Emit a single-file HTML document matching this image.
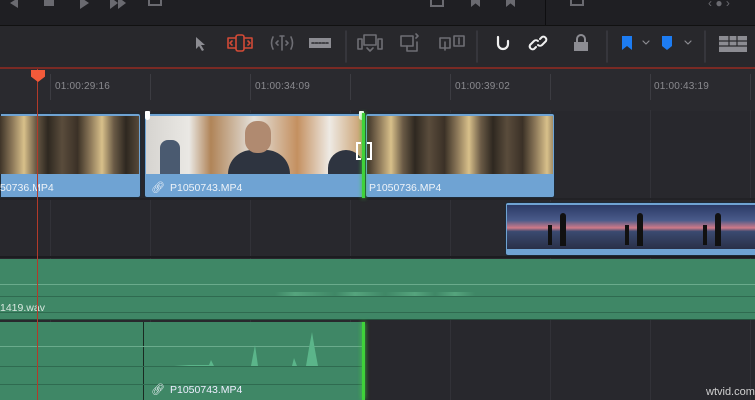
<!DOCTYPE html>
<html><head><meta charset="utf-8"><style>
*{margin:0;padding:0;box-sizing:border-box}
body{width:755px;height:400px;overflow:hidden;background:#28282d;position:relative;font-family:"Liberation Sans",sans-serif}
.a{position:absolute}
.tc{position:absolute;top:81px;font-size:10px;color:#8a8a8f;letter-spacing:.2px}
.tick{position:absolute;top:74px;width:1px;height:26px;background:#3c3c42}
.grid{position:absolute;top:110px;width:1px;height:290px;background:#323238}
.lbl{position:absolute;font-size:10.5px;color:#eef3f8}
.thumbA{background:repeating-linear-gradient(90deg,#3e3428 0px,#8a7658 12px,#d8c08a 24px,#6a5a46 36px,#2e2820 48px,#5a4c3c 62px,#3a3026 78px)}
.thumbB{background:linear-gradient(90deg,#d6d4d0 0%,#eae8e4 20%,#b08458 30%,#e5e2dc 50%,#c49060 70%,#eeeae4 85%,#caa070 100%)}
.sun{background:linear-gradient(180deg,#2b3a66 0%,#4a5b8a 35%,#d07a88 52%,#3a4a70 60%,#2a3048 100%)}
</style></head><body>
<div class="a" style="left:0;top:0;width:755px;height:25px;background:#1f1f23"></div>
<div class="a" style="left:0;top:25px;width:755px;height:1px;background:#111"></div>
<div class="a" style="left:545px;top:0;width:1px;height:25px;background:#0e0e10"></div>
<div class="a" style="left:10px;top:-2px;width:0;height:0;border-top:5px solid transparent;border-bottom:5px solid transparent;border-right:8px solid #6a6a70"></div>
<div class="a" style="left:44px;top:0;width:10px;height:6px;background:#6a6a70"></div>
<div class="a" style="left:80px;top:-3px;width:0;height:0;border-top:6px solid transparent;border-bottom:6px solid transparent;border-left:9px solid #6a6a70"></div>
<div class="a" style="left:110px;top:-3px;width:0;height:0;border-top:6px solid transparent;border-bottom:6px solid transparent;border-left:8px solid #6a6a70"></div>
<div class="a" style="left:118px;top:-3px;width:0;height:0;border-top:6px solid transparent;border-bottom:6px solid transparent;border-left:8px solid #6a6a70"></div>
<div class="a" style="left:148px;top:0;width:14px;height:6px;border:2px solid #6a6a70;border-top:none"></div>
<div class="a" style="left:430px;top:0;width:14px;height:7px;border:2px solid #6a6a70;border-top:none"></div>
<div class="a" style="left:471px;top:-2px;width:9px;height:9px;background:#6a6a70;clip-path:polygon(0 0,100% 0,100% 100%,50% 60%,0 100%)"></div>
<div class="a" style="left:506px;top:-2px;width:9px;height:9px;background:#6a6a70;clip-path:polygon(0 0,100% 0,100% 100%,50% 60%,0 100%)"></div>
<div class="a" style="left:570px;top:0;width:14px;height:6px;border:2px solid #6a6a70;border-top:none"></div>
<div class="a" style="left:708px;top:-4px;font-size:12px;color:#6a6a70">‹ ● ›</div>
<div class="a" style="left:0;top:26px;width:755px;height:41px;background:#28282c"></div>
<svg class="a" style="left:0;top:26px" width="755" height="41">
<g fill="none" stroke-width="1.6" stroke-linecap="round" stroke-linejoin="round">
<path d="M196 11 L196 23 L199 20 L202 25 L204 24 L201 19 L205 19 Z" fill="#8c8c92" stroke="none"/>
<rect x="228" y="12" width="24" height="10" stroke="#d34a36"/>
<rect x="236" y="9" width="8" height="16" rx="2" stroke="#d34a36" fill="#28282c"/>
<path d="M232 15 l-2 2 l2 2 M248 15 l2 2 l-2 2" stroke="#d34a36"/>
<path d="M273 11 q-3 6 0 12 M291 11 q3 6 0 12 M282 10 v14 M280 10 h4 M278 15 l-2 2 l2 2 M286 15 l2 2 l-2 2" stroke="#6e6e74"/>
<rect x="309" y="12" width="22" height="10" fill="#8c8c92" stroke="none"/>
<path d="M312 17 h16" stroke="#28282c" stroke-dasharray="2 1.5"/>
<line x1="346" y1="5" x2="346" y2="36" stroke="#3a3a40"/>
<rect x="358" y="13" width="4" height="10" stroke="#6e6e74"/><rect x="378" y="13" width="4" height="10" stroke="#6e6e74"/>
<rect x="364" y="9" width="12" height="10" stroke="#6e6e74"/><path d="M367 22 l3 3 l3 -3" stroke="#6e6e74"/>
<rect x="401" y="10" width="12" height="10" stroke="#6e6e74"/><path d="M407 20 v5 h10 v-9 M416 8 l2 2 l-2 2" stroke="#6e6e74"/>
<rect x="440" y="12" width="10" height="10" stroke="#6e6e74"/><rect x="454" y="10" width="10" height="10" stroke="#6e6e74"/><path d="M445 16 v8 M459 12 v6" stroke="#6e6e74"/>
<line x1="477" y1="5" x2="477" y2="36" stroke="#3a3a40"/>
<path d="M498 11 v7 a5 5 0 0 0 10 0 v-3" stroke="#f0f0f0" stroke-width="2.2"/>
<path d="M536 21 l-2 2 a3 3 0 0 1 -4 -4 l4 -4 a3 3 0 0 1 4 0 M540 13 l2 -2 a3 3 0 0 1 4 4 l-4 4 a3 3 0 0 1 -4 0" stroke="#f0f0f0" stroke-width="2"/>
<rect x="574" y="16" width="14" height="9" fill="#8c8c92" stroke="none"/><path d="M577 16 v-3 a4 4 0 0 1 8 0 v3" stroke="#8c8c92" stroke-width="2"/>
<line x1="607" y1="5" x2="607" y2="36" stroke="#3a3a40"/>
<path d="M622 10 h10 v14 l-5 -4 l-5 4 Z" fill="#1d7cf2" stroke="none"/>
<path d="M643 15 l3 3 l3 -3 M685 15 l3 3 l3 -3" stroke="#8c8c92" stroke-width="1.2"/>
<path d="M662 10 h10 v10 l-5 4 l-5 -4 Z" fill="#1d7cf2" stroke="none"/>
<line x1="705" y1="5" x2="705" y2="36" stroke="#3a3a40"/>
<rect x="719" y="10" width="28" height="16" fill="#8c8c92" stroke="none"/>
<path d="M719 15 h28 M719 20 h28 M729 10 v10 M737 10 v10" stroke="#28282c" stroke-width="1.2"/>
</g></svg>
<div class="a" style="left:0;top:67px;width:755px;height:2px;background:#7a2a24"></div>
<div class="a" style="left:0;top:69px;width:755px;height:42px;background:#2a2a2f"></div>
<div class="tick" style="left:50px"></div><div class="tick" style="left:150px"></div><div class="tick" style="left:250px"></div><div class="tick" style="left:350px"></div><div class="tick" style="left:450px"></div><div class="tick" style="left:550px"></div><div class="tick" style="left:650px"></div><div class="tick" style="left:750px"></div>
<div class="tc" style="left:55px">01:00:29:16</div>
<div class="tc" style="left:255px">01:00:34:09</div>
<div class="tc" style="left:455px">01:00:39:02</div>
<div class="tc" style="left:654px">01:00:43:19</div>
<div class="grid" style="left:50px"></div><div class="grid" style="left:150px"></div><div class="grid" style="left:250px"></div><div class="grid" style="left:350px"></div><div class="grid" style="left:450px"></div><div class="grid" style="left:550px"></div><div class="grid" style="left:650px"></div><div class="grid" style="left:750px"></div>
<div class="a" style="left:0;top:198px;width:755px;height:2px;background:#222226"></div>
<div class="a" style="left:0;top:256px;width:755px;height:2px;background:#1c1c20"></div>
<div class="a" style="left:0;top:113px;width:141px;height:85px;background:#6fa3d3;border-radius:0 3px 3px 0;border:1px solid #1e2a36"></div>
<div class="a thumbA" style="left:0;top:116px;width:139px;height:58px"></div>
<div class="lbl" style="left:0;top:182px">50736.MP4</div>
<div class="a" style="left:144px;top:113px;width:220px;height:85px;background:#6fa3d3;border-radius:3px;border:1px solid #1e2a36"></div>
<div class="a thumbB" style="left:146px;top:116px;width:216px;height:58px"></div>
<div class="a" style="left:160px;top:140px;width:20px;height:34px;background:#4a5a70;border-radius:8px 8px 0 0"></div>
<div class="a" style="left:228px;top:150px;width:62px;height:24px;background:#2e3440;border-radius:30px 30px 0 0"></div>
<div class="a" style="left:245px;top:121px;width:26px;height:32px;background:#b08a70;border-radius:12px"></div>
<div class="a" style="left:328px;top:150px;width:36px;height:24px;background:#2e3440;border-radius:20px 20px 0 0"></div>
<div class="lbl" style="left:170px;top:182px">P1050743.MP4</div>
<div class="lbl" style="left:151px;top:181px;font-size:11px">&#x1F517;&#xFE0E;</div>
<div class="a" style="left:365px;top:113px;width:190px;height:85px;background:#6fa3d3;border-radius:3px;border:1px solid #1e2a36"></div>
<div class="a thumbA" style="left:367px;top:116px;width:186px;height:58px"></div>
<div class="lbl" style="left:369px;top:182px">P1050736.MP4</div>
<div class="a" style="left:145px;top:111px;width:5px;height:9px;background:#fff;border-radius:1px 1px 3px 3px"></div>
<div class="a" style="left:359px;top:111px;width:5px;height:9px;background:#fff;border-radius:1px 1px 3px 3px"></div>
<div class="a" style="left:362px;top:113px;width:3px;height:85px;background:#3fd23a;box-shadow:0 0 4px #3fd23a"></div>
<div class="a" style="left:356px;top:142px;width:5px;height:18px;border:2px solid #fff;border-right:none"></div>
<div class="a" style="left:367px;top:142px;width:5px;height:18px;border:2px solid #fff;border-left:none"></div>
<div class="a" style="left:505px;top:202px;width:252px;height:54px;background:#6fa3d3;border-radius:3px 0 0 3px;border:1px solid #1e2a36"></div>
<div class="a sun" style="left:507px;top:205px;width:248px;height:44px"></div>
<div class="a" style="left:560px;top:213px;width:6px;height:33px;background:#111;border-radius:3px 3px 0 0"></div>
<div class="a" style="left:548px;top:225px;width:4px;height:20px;background:#111"></div>
<div class="a" style="left:637px;top:213px;width:6px;height:33px;background:#111;border-radius:3px 3px 0 0"></div>
<div class="a" style="left:625px;top:225px;width:4px;height:20px;background:#111"></div>
<div class="a" style="left:715px;top:213px;width:6px;height:33px;background:#111;border-radius:3px 3px 0 0"></div>
<div class="a" style="left:703px;top:225px;width:4px;height:20px;background:#111"></div>
<div class="a" style="left:0;top:259px;width:755px;height:61px;background:#3f8766;border-bottom:1px solid #24503c"></div>
<div class="a" style="left:0;top:284px;width:755px;height:1px;background:#6aab8c"></div>
<div class="a" style="left:0;top:312px;width:755px;height:1px;background:#2f6b50"></div>
<div class="a" style="left:0;top:296px;width:755px;height:1px;background:#2f6b50"></div>
<div class="a" style="left:275px;top:292px;width:200px;height:4px;background:linear-gradient(90deg,transparent,#55a47d 10%,transparent 30%,#55a47d 40%,transparent 55%,#55a47d 70%,transparent 80%,#55a47d 90%,transparent)"></div>
<div class="lbl" style="left:0;top:302px;color:#d8e8e0">1419.wav</div>
<div class="a" style="left:0;top:322px;width:143px;height:78px;background:#3f8766"></div>
<div class="a" style="left:143px;top:322px;width:1px;height:78px;background:#1a2a22"></div>
<div class="a" style="left:144px;top:322px;width:219px;height:78px;background:#3f8766"></div>
<div class="a" style="left:0;top:384px;width:363px;height:1px;background:#2f6b50"></div>
<div class="a" style="left:0;top:366px;width:363px;height:1px;background:#2f6b50"></div>
<div class="a" style="left:0;top:346px;width:363px;height:1px;background:#6aab8c"></div>
<svg class="a" style="left:144px;top:330px" width="220" height="40"><path d="M30 36 L45 35 L65 35 L67 30 L70 36 L107 36 L111 15 L114 36 L148 36 L150 28 L153 36 L162 36 L165 18 L168 2 L171 20 L174 36 Z" fill="#5bb58a"/></svg>
<div class="lbl" style="left:170px;top:384px;color:#eef">P1050743.MP4</div>
<div class="lbl" style="left:151px;top:383px;font-size:11px">&#x1F517;&#xFE0E;</div>
<div class="a" style="left:362px;top:322px;width:3px;height:78px;background:#3fd23a;box-shadow:0 0 5px #3fd23a"></div>
<div class="a" style="left:706px;top:386px;font-size:11px;color:#d0d0d0">wtvid.com</div>
<div class="a" style="left:37px;top:69px;width:1px;height:331px;background:#b23a2a"></div>
<div class="a" style="left:31px;top:70px;width:14px;height:12px;background:#f25a3a;clip-path:polygon(0 0,100% 0,100% 55%,50% 100%,0 55%)"></div>
</body></html>
